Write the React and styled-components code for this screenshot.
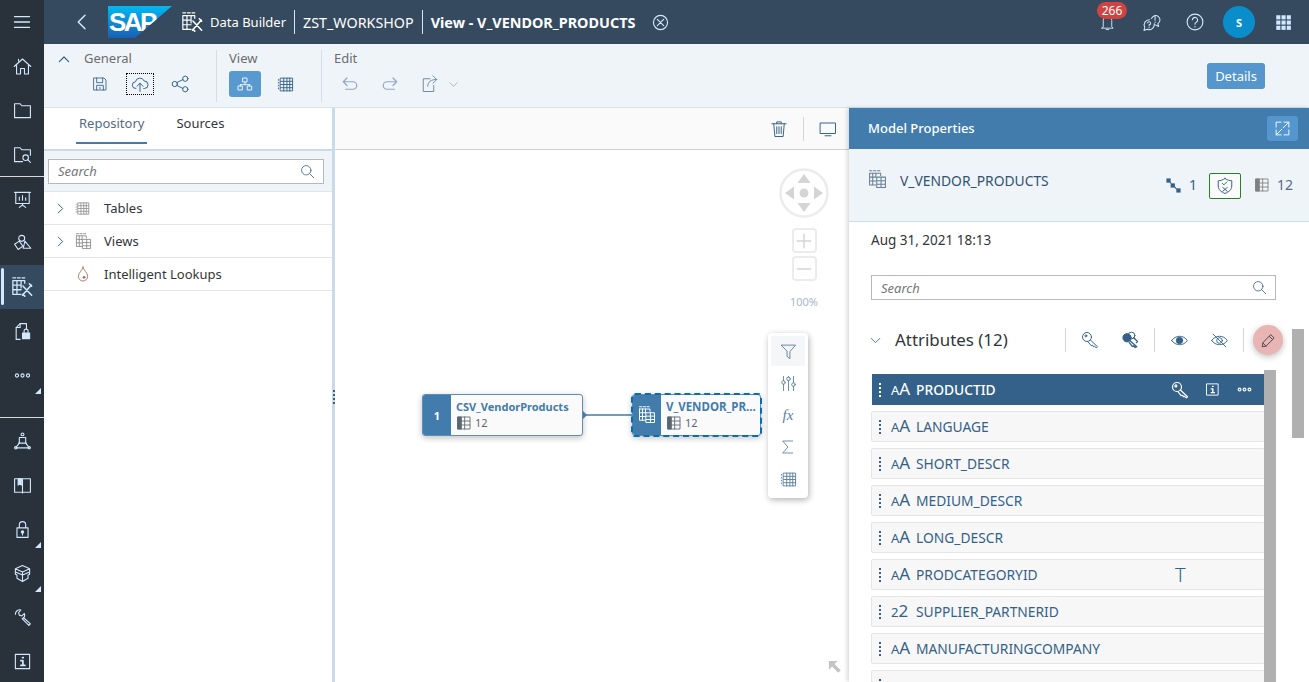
import React from 'react';
import styled, { createGlobalStyle } from 'styled-components';

const GlobalStyle = createGlobalStyle`
	html, body, #root {
		margin: 0;
		height: 100%;
		overflow: hidden;
	}
	body {
		font-family: 'Noto Sans', 'Liberation Sans', sans-serif;
		font-size: 13px;
		color: #32363a;
	}
`;

const Ico = styled.svg.attrs((p) => ({
	viewBox: '0 0 24 24',
	width: p.$s || 18,
	height: p.$s || 18,
	fill: 'none',
	stroke: 'currentColor',
	strokeLinecap: 'round',
	strokeLinejoin: 'round',
}))`
	stroke-width: ${(p) => p.$w || 1.3};
	color: ${(p) => p.$c || 'inherit'};
	flex: none;
	display: block;
	margin-right: ${(p) => p.$mr || 0}px;
	margin-left: ${(p) => p.$ml || 0}px;
`;

const P = {
	menu: <path d="M3 5.500h18M3 12h18M3 18.500h18" />,
	home: <path d="M1.500 12 12 2.500 22.500 12M4.500 10v11.500h5v-7h5v7h5V10M7 5V3" />,
	folder: <path d="M2 3.500h7l2 2.500h11v15H2z" />,
	folderSearch: (
		<>
			<path d="M12 21H2V3.500h7l2 2.500h11v7" />
			<circle cx="16" cy="16" r="3.500" />
			<path d="m18.500 18.500 3.500 3.500" />
		</>
	),
	board: <path d="M2 3h20M3.500 3v14h17V3M12 17v2M12 19l-4 3M12 19l4 3M8 13V9M12 13V7M16 13v-3" />,
	shapes: (
		<>
			<circle cx="11" cy="5.500" r="3.800" />
			<path d="m2 13 6-4 4.500 6.500-6 4zM15 9l7.500 9H13z" />
		</>
	),
	builder: (
		<>
			<path d="M2 2h3M7 2h3M12 2h3M2 5h13v3M2 5v15h9M2 10h9M2 15h9M6.500 5v15M11 5v8" />
			<path d="m13 11 9.500 10M22 10 12.500 21M20 8.500l2.500 2.500M13 20l2 2" strokeWidth="1.700" />
		</>
	),
	fileLock: (
		<>
			<path d="M9 22H4V7l5-5h8v7" />
			<path d="M4 7h5V2" />
			<rect x="12" y="14" width="9" height="7" fill="currentColor" />
			<path d="M14 14v-2.500a2.500 2.500 0 0 1 5 0V14" />
		</>
	),
	dots: (
		<>
			<circle cx="5" cy="12" r="2" />
			<circle cx="12" cy="12" r="2" />
			<circle cx="19" cy="12" r="2" />
		</>
	),
	person: (
		<>
			<circle cx="12" cy="3" r="1.800" />
			<path d="M8 7h8v7H8zM8 14l-4 5M16 14l4 5M7 14h10M3.500 20h17" />
			<circle cx="3.500" cy="20" r="1.500" />
			<circle cx="20.500" cy="20" r="1.500" />
		</>
	),
	book: (
		<>
			<path d="M2 3.500h20v17H2zM12 3.500v18" />
			<path d="M6.500 3.500h4v8l-2-1.500-2 1.500z" fill="currentColor" />
		</>
	),
	lock: (
		<>
			<path d="M5 10h14v12H5zM8 10V6a4 4 0 0 1 8 0v4" />
			<circle cx="12" cy="15" r="1.500" fill="currentColor" />
			<path d="M12 16v3" />
		</>
	),
	box: <path d="m12 2 9 4v4l-9 4-9-4V6zM3 6l9 4 9-4M3 10v3l2 1v4l7 4 7-4v-4l2-1v-3M12 14v8M12 10v4" />,
	wrench: <path d="M3 8a5.500 5.500 0 0 1 7-5.500L7 6l1 3 3 1 3.500-3a5.500 5.500 0 0 1-3 6.500L20 22l2-2-9-8" />,
	info: (
		<>
			<rect x="3" y="3" width="18" height="18" />
			<path d="M10 11h2.500v6M10 17h5M12 7h1" strokeWidth="2.200" />
		</>
	),
	back: <path d="M16 3 7 12l9 9" />,
	close: (
		<>
			<circle cx="12" cy="12" r="10" />
			<path d="m7.500 7.500 9 9M16.500 7.500l-9 9" />
		</>
	),
	bell: <path d="M6 18V9a6 6 0 0 1 12 0v9l2 2H4zM10 22h4" />,
	chat: (
		<>
			<path d="M9.500 8.500a6.500 6.500 0 0 0-6 9.500L2.500 22l4-1.500a6.500 6.500 0 0 0 9-7" />
			<path d="M12 7a5.500 5.500 0 1 1 8 6.500l1 3.500-4-2" />
			<path d="M7 12.500a2 2 0 1 1 2 2.500v1M9 18v.5M16.500 4v5M16.500 11.500v.5" />
		</>
	),
	help: (
		<>
			<circle cx="12" cy="12" r="10.500" />
			<path d="M8.500 9a3.500 3.500 0 1 1 5 3.500c-1 .6-1.500 1.200-1.500 2.500M12 18v.5" />
		</>
	),
	apps: (
		<g fill="currentColor" stroke="none">
			{[3, 10, 17].map((y) =>
				[3, 10, 17].map((x) => <rect key={x + '-' + y} x={x} y={y} width="5.500" height="5.500" />)
			)}
		</g>
	),
	up: <path d="m5 16 7-7 7 7" />,
	down: <path d="m4 8 8 8 8-8" />,
	right: <path d="m8 4 8 8-8 8" />,
	save: <path d="M3 3h15l3 3v15H3zM7 3v7h9V3M7 21v-7h10v7M12 17v2" />,
	upload: <path d="M6.500 18A4.500 4.500 0 0 1 6 9a6 6 0 0 1 11.500-1A5 5 0 0 1 18 18h-1M12 22V11M8 15l4-4 4 4" />,
	share: (
		<>
			<circle cx="19" cy="5" r="3.500" />
			<circle cx="5" cy="12" r="3.500" />
			<circle cx="19" cy="19" r="3.500" />
			<path d="m8 10 8-4M8 14l8 4" />
		</>
	),
	tree: <path d="M9 3h6v6H9zM12 9v4M5 13h14M5 13v2M19 13v2M2 15h6v6H2zM16 15h6v6h-6z" />,
	grid: (
		<path d="M5 3h17v18H5zM2 5v1M2 9v1M2 13v1M2 17v1M5 7.500h17M5 12h17M5 16.500h17M9.500 3v18M14 3v18M18 3v18" />
	),
	undo: <path d="M8 4 3 9l5 5M3 9h13a5 5 0 0 1 0 10H6" />,
	redo: <path d="m16 4 5 5-5 5M21 9H8a5 5 0 0 0 0 10h10" />,
	exportTo: <path d="M12 5H3v17h14v-8M9 15c0-6 4-9 12-9M16 1l5 5-5 5" />,
	search: (
		<>
			<circle cx="10" cy="10" r="7.500" />
			<path d="m15.500 15.500 6.500 6.500" />
		</>
	),
	table: (
		<>
			<path d="M3 3h18v18H3z" />
			<path d="M3 3h5v18H3z" fill="currentColor" />
			<path d="M13 3v18M3 9h18M3 15h18" />
		</>
	),
	views: (
		<>
			<path d="M2 1h3M7 1h3M12 1h3M2 4h14v3M2 4v15h8M2 9h8M2 14h8M6 4v15M10 4v5" />
			<path d="M11 9h11v13H11zM11 13.500h11M11 18h11M16.500 9v13" />
		</>
	),
	drop: (
		<>
			<path d="M12 1.500C11 7 5 10 5 15.500a7 7 0 0 0 14 0C19 10 13 7 12 1.500z" />
			<circle cx="13.500" cy="17" r="1.500" fill="currentColor" />
		</>
	),
	trash: (
		<>
			<path d="M2.500 5h19M9 5V2.500h6V5M5 5l1.500 17h11L19 5" />
			<path d="M9 9v9M12 9v9M15 9v9" />
		</>
	),
	monitor: <path d="M2 4h20v14H2zM8 21h8" />,
	funnel: <path d="M2 3h20l-8 9v10l-4-3v-7z" />,
	sliders: (
		<>
			<path d="M5 2v6M5 13v9M12 2v1M12 8v14M19 2v9M19 16v6" />
			<circle cx="5" cy="10.500" r="2.500" />
			<circle cx="12" cy="5.500" r="2.500" />
			<circle cx="19" cy="13.500" r="2.500" />
		</>
	),
	sigma: <path d="M19 3H4l8 9-8 9h15" />,
	key: (
		<>
			<circle cx="8" cy="8" r="6" />
			<circle cx="6.500" cy="6.500" r="1.300" />
			<path d="m12.500 12 9.500 9-1.500 1.500-2.500-2-1.500.5-1-2-2 .5-4-5" />
		</>
	),
	keys: (
		<>
			<circle cx="8" cy="9" r="5.500" fill="currentColor" />
			<circle cx="14" cy="6" r="4.500" />
			<path d="m12 13 9 8-2 1-2-2-2 .5-4-5M17 9l5 5-1.500 1.500" strokeWidth="1.800" />
		</>
	),
	eye: (
		<>
			<path d="M1 12c5-8 17-8 22 0-5 8-17 8-22 0z" />
			<circle cx="12" cy="12" r="4.500" fill="currentColor" />
		</>
	),
	eyeOff: (
		<>
			<path d="M1 12c5-8 17-8 22 0-5 8-17 8-22 0z" />
			<circle cx="12" cy="12" r="4" />
			<path d="m3 3 18 18" />
		</>
	),
	pencil: <path d="m16 3 5 5L8 21l-6 1 1-6zM13.500 5.500l5 5M3 16l5 5" />,
	expand: <path d="M10 3H3v7M14 21h7v-7M14 3h7v7M21 3l-8 8M3 14v7h7M3 21l8-8" />,
	arrowUpLeft: <path d="M3 3h14l-5 5 10 10-4 4L8 12l-5 5z" fill="currentColor" stroke="none" />,
	shield: (
		<>
			<path d="M12 2c3 2 6 3 9 3v7c0 5-4 8-9 10-5-2-9-5-9-10V5c3 0 6-1 9-3z" />
			<path d="m8.500 8.500 2 2 4-4" stroke="#2b7c2b" />
			<path d="m9 14 6 5M15 14l-6 5" />
		</>
	),
	linked: (
		<g fill="currentColor" stroke="none">
			<rect x="2" y="2" width="6" height="6" />
			<rect x="8" y="9" width="6" height="6" />
			<rect x="16" y="16" width="6" height="6" />
			<path d="M6 6h1l3 4-1 1zM12 13l1-1 4 5-1 1z" />
		</g>
	),
};

const Shell = styled.div`
	display: flex;
	height: 682px;
	overflow: hidden;
`;

const SideNav = styled.nav`
	width: 44px;
	flex: none;
	background: #29313a;
	color: #d1e8ff;
	display: flex;
	flex-direction: column;
`;

const NavItem = styled.div`
	height: 44px;
	flex: none;
	display: flex;
	align-items: center;
	justify-content: center;
	position: relative;
	background: ${(p) => (p.$active ? '#354a5f' : 'transparent')};
	&::before {
		content: '';
		display: ${(p) => (p.$active ? 'block' : 'none')};
		position: absolute;
		left: 1px;
		top: 3px;
		bottom: 4px;
		width: 3px;
		border-radius: 2px;
		background: #d1e8ff;
	}
	&::after {
		content: '';
		display: ${(p) => (p.$more ? 'block' : 'none')};
		position: absolute;
		right: 3px;
		bottom: 3px;
		border-style: solid;
		border-width: 0 0 6px 6px;
		border-color: transparent transparent #d1e8ff transparent;
	}
`;

const NavRule = styled.div`
	height: 1px;
	flex: none;
	background: #d5dadd;
	margin-top: ${(p) => p.$gap || 0}px;
	margin-bottom: ${(p) => p.$after || 0}px;
`;

const Main = styled.div`
	flex: 1;
	min-width: 0;
	display: flex;
	flex-direction: column;
`;

const ShellBar = styled.header`
	height: 44px;
	flex: none;
	background: #354a5f;
	color: #fff;
	display: flex;
	align-items: center;
	padding-left: 29px;
`;

const BackBtn = styled.div`
	color: #d1e8ff;
	width: 35px;
	flex: none;
`;

const Logo = styled.div`
	width: 64px;
	height: 32px;
	margin-right: 9px;
	flex: none;
	clip-path: polygon(0 0, 100% 0, 42% 100%, 0 100%);
	background: linear-gradient(to bottom, #00b9f2, #1a5fb4);
	color: #fff;
	font: bold 26px/33px 'Liberation Sans', sans-serif;
	letter-spacing: -2.500px;
	padding-left: 1px;
	box-sizing: border-box;
`;

const Crumb = styled.span`
	font-size: ${(p) => p.$fs || 13}px;
	font-weight: ${(p) => (p.$bold ? 700 : 400)};
	white-space: nowrap;
`;

const CrumbRule = styled.div`
	width: 1px;
	height: 24px;
	background: #d1e8ff;
	margin: 0 8px;
	flex: none;
`;

const ShellActions = styled.div`
	margin-left: auto;
	display: flex;
	align-items: center;
	color: #d1e8ff;
	padding-right: 4px;
`;

const ShellBtn = styled.div`
	width: 44px;
	height: 44px;
	display: flex;
	align-items: center;
	justify-content: center;
	position: relative;
`;

const Badge = styled.span`
	position: absolute;
	left: 12px;
	top: 2px;
	width: 30px;
	height: 17px;
	border-radius: 9px;
	background: #d04343;
	color: #fff;
	font-size: 12px;
	line-height: 17px;
	text-align: center;
`;

const Avatar = styled.div`
	width: 32px;
	height: 32px;
	border-radius: 50%;
	background: #0a8ecb;
	color: #fff;
	font-size: 11px;
	font-weight: 700;
	display: flex;
	align-items: center;
	justify-content: center;
`;

const ActionBar = styled.div`
	height: 63px;
	flex: none;
	background: #eff4f9;
	border-bottom: 1px solid #d9e1e8;
	display: flex;
	align-items: flex-start;
	color: #6a6d70;
`;

const Collapse = styled.div`
	width: 40px;
	flex: none;
	padding: 7px 0 0 12px;
	box-sizing: border-box;
	color: #346187;
`;

const Section = styled.section`
	height: 52px;
	margin-top: 6px;
	padding-right: ${(p) => p.$pr || 0}px;
	border-right: ${(p) => (p.$last ? 'none' : '1px solid #d5dde5')};
	margin-right: 12px;
	flex: none;
`;

const SectionTitle = styled.div`
	line-height: 16px;
	font-size: 13px;
	color: #6a6d70;
`;

const SectionTools = styled.div`
	display: flex;
	align-items: center;
	margin-top: 5px;
	gap: ${(p) => p.$gap || 0}px;
`;

const Tool = styled.div`
	width: ${(p) => p.$w || 32}px;
	height: 26px;
	display: flex;
	align-items: center;
	justify-content: center;
	box-sizing: border-box;
	color: ${(p) => (p.$on ? '#fff' : p.$c || '#346187')};
	background: ${(p) => (p.$on ? '#5899d0' : 'transparent')};
	border-radius: 3px;
	outline: ${(p) => (p.$focus ? '1px dotted #000' : 'none')};
	outline-offset: -3px;
	margin-left: ${(p) => p.$pull || 0}px;
`;

const DetailsBtn = styled.div`
	margin: 19px 44px 0 auto;
	width: 58px;
	height: 26px;
	background: #5496cd;
	border-radius: 3px;
	color: #fff;
	font-size: 13px;
	line-height: 26px;
	text-align: center;
	flex: none;
`;

const Workspace = styled.div`
	flex: 1;
	min-height: 0;
	display: flex;
`;

const LeftPanel = styled.aside`
	width: 288px;
	flex: none;
	background: #fff;
`;

const Tabs = styled.div`
	height: 41px;
	display: flex;
	gap: 29px;
	padding-left: 32px;
	border-bottom: 2px solid #cbdae9;
	background: #fff;
`;

const Tab = styled.div`
	height: 36px;
	box-sizing: border-box;
	line-height: 31px;
	font-size: 13px;
	color: ${(p) => (p.$on ? '#556b82' : '#32363a')};
	border-bottom: ${(p) => (p.$on ? '2px solid #427cac' : 'none')};
	padding: 0 ${(p) => (p.$on ? 3 : 0)}px;
`;

const SearchStrip = styled.div`
	height: 40px;
	background: #eff4f9;
	border-bottom: 1px solid #e5e5e5;
	display: flex;
	align-items: center;
	padding: 0 8px 0 4px;
`;

const SearchBox = styled.div`
	height: 25px;
	flex: 1;
	background: #fff;
	border: 1px solid #b8b8b8;
	box-sizing: border-box;
	display: flex;
	align-items: center;
	justify-content: space-between;
	padding: 0 8px 0 9px;
	font-style: italic;
	font-size: 13px;
	color: #74777a;
`;

const SearchGlyph = styled.span`
	color: #346187;
`;

const TreeRow = styled.div`
	height: 32px;
	border-bottom: 1px solid #e5e5e5;
	display: flex;
	align-items: center;
	padding-left: ${(p) => (p.$leaf ? 31 : 10)}px;
	font-size: 13px;
`;

const Twisty = styled.span`
	color: #346187;
	width: 21px;
	flex: none;
`;

const TreeIcon = styled.span`
	color: #8f8f8f;
	width: 29px;
	flex: none;
`;

const Splitter = styled.div`
	width: 3px;
	flex: none;
	background: #cbdae9;
	position: relative;
	&::after {
		content: '';
		position: absolute;
		left: 1px;
		top: 282px;
		height: 15px;
		width: 2px;
		background: repeating-linear-gradient(to bottom, #346187 0 2px, transparent 2px 4px);
	}
`;

const Canvas = styled.main`
	flex: 1;
	min-width: 0;
	display: flex;
	flex-direction: column;
	background: #fff;
`;

const CanvasBar = styled.div`
	height: 41px;
	flex: none;
	background: #fafafa;
	border-bottom: 1px solid #cfcfcf;
	display: flex;
	align-items: center;
	justify-content: flex-end;
	color: #346187;
	gap: 15px;
	padding-right: 12px;
`;

const BarRule = styled.div`
	width: 1px;
	height: 24px;
	background: #d5d5d5;
`;

const Diagram = styled.div`
	flex: 1;
	position: relative;
	min-height: 0;
`;

const Node = styled.div`
	position: absolute;
	left: ${(p) => p.$x}px;
	top: 244px;
	width: ${(p) => p.$w}px;
	height: 42px;
	box-sizing: border-box;
	display: flex;
	background: #fafafa;
	border: 1px solid #5b8fb8;
	border-radius: 3px;
	overflow: hidden;
	box-shadow: 0 2px 6px rgba(0, 0, 0, 0.25);
	outline: ${(p) => (p.$selected ? '2px dashed #0a6ead' : 'none')};
	outline-offset: -1px;
`;

const NodeBadge = styled.div`
	width: 28px;
	flex: none;
	background: #427cac;
	color: #fff;
	font-size: 11px;
	font-weight: 700;
	display: flex;
	align-items: center;
	justify-content: center;
`;

const NodeBody = styled.div`
	padding: 4px 0 0 5px;
	min-width: 0;
`;

const NodeName = styled.div`
	font-size: ${(p) => p.$fs || 11}px;
	font-weight: 700;
	line-height: 16px;
	color: #427cac;
	white-space: nowrap;
`;

const NodeCount = styled.div`
	display: flex;
	align-items: center;
	gap: 3px;
	font-size: 11px;
	line-height: 16px;
	color: #5c6670;
`;

const Wire = styled.div`
	position: absolute;
	left: 248px;
	top: 264px;
	width: 49px;
	height: 2px;
	background: #6e9dc4;
	&::before {
		content: '';
		position: absolute;
		left: 0;
		top: -3px;
		border-style: solid;
		border-width: 4px 0 4px 4px;
		border-color: transparent transparent transparent #427cac;
	}
`;

const NodeTools = styled.div`
	position: absolute;
	left: 433px;
	top: 183px;
	width: 40px;
	height: 165px;
	padding: 3px;
	box-sizing: border-box;
	background: #fff;
	border-radius: 4px;
	box-shadow: 1px 2px 6px rgba(0, 0, 0, 0.3);
	display: flex;
	flex-direction: column;
	gap: 2px;
`;

const NodeTool = styled.div`
	height: 30px;
	flex: none;
	display: flex;
	align-items: center;
	justify-content: center;
	background: ${(p) => (p.$on ? '#f5f6f7' : 'transparent')};
	color: #5d7f9e;
	font: italic 15px 'Liberation Serif', serif;
`;

const Navigator = styled.div`
	position: absolute;
	left: 444px;
	top: 18px;
	width: 50px;
	display: flex;
	flex-direction: column;
	align-items: center;
	color: #d5d5d5;
`;

const Ring = styled.svg.attrs({ viewBox: '0 0 50 50', width: 50, height: 50 })`
	display: block;
	margin-bottom: 10px;
`;

const ZoomBtn = styled.div`
	width: 25px;
	height: 25px;
	box-sizing: border-box;
	margin-bottom: 3px;
	border: 2px solid #ececec;
	border-radius: 4px;
	display: flex;
	align-items: center;
	justify-content: center;
`;

const ZoomLevel = styled.div`
	font-size: 11px;
	color: #a9b8c8;
	margin-top: 10px;
`;

const CornerArrow = styled.div`
	position: absolute;
	right: 7px;
	bottom: 8px;
	color: #c4c4c4;
`;

const RightPanel = styled.aside`
	width: 460px;
	flex: none;
	background: #fff;
	position: relative;
	overflow: hidden;
	box-shadow: -2px 0 4px rgba(0, 0, 0, 0.15);
`;

const PanelHead = styled.div`
	height: 41px;
	box-sizing: border-box;
	background: #427cac;
	color: #fff;
	font-size: 13px;
	font-weight: 500;
	display: flex;
	align-items: center;
	justify-content: space-between;
	padding: 0 11px 0 19px;
	line-height: 16px;
	span {
		margin-top: -2px;
	}
`;

const ExpandBtn = styled.div`
	width: 31px;
	height: 25px;
	background: #5496cd;
	border-radius: 3px;
	display: flex;
	align-items: center;
	justify-content: center;
`;

const Summary = styled.div`
	height: 73px;
	box-sizing: border-box;
	background: #eff4f9;
	border-bottom: 1px solid #c9dcee;
	display: flex;
	align-items: flex-start;
	padding: 21px 4px 0 19px;
	color: #32536f;
`;

const SummaryName = styled.div`
	margin: 1px 0 0 13px;
	font-size: 13.850px;
	line-height: 20px;
	flex: 1;
`;

const SummaryStat = styled.div`
	display: flex;
	align-items: center;
	gap: ${(p) => p.$gap || 8}px;
	margin: 6px 12px 0 0;
	font-size: 14px;
	line-height: 18px;
	color: ${(p) => p.$c || '#346187'};
`;

const ShieldBox = styled.div`
	width: 32px;
	height: 26px;
	box-sizing: border-box;
	border: 1px solid #2b7c2b;
	border-radius: 2px;
	background: #fafafa;
	color: #346187;
	margin: 3px 13px 0 0;
	display: flex;
	align-items: center;
	justify-content: center;
`;

const Stamp = styled.div`
	padding: 9px 0 0 22px;
	height: 35px;
	line-height: 18px;
	font-size: 13.500px;
`;

const PanelSearch = styled(SearchBox)`
	width: 405px;
	flex: none;
	height: 25px;
	margin: 9px 0 0 22px;
`;

const AttrHead = styled.div`
	height: 30px;
	margin: 25px 0 19px;
	padding-left: 20px;
	display: flex;
	align-items: center;
	color: #346187;
`;

const AttrTitle = styled.h3`
	margin: -2px 0 0 13px;
	width: 166px;
	flex: none;
	font-size: 16.900px;
	font-weight: 400;
	color: #32363a;
	white-space: nowrap;
`;

const AttrTool = styled.div`
	width: 40px;
	display: flex;
	justify-content: center;
	flex: none;
`;

const AttrRule = styled.div`
	width: 1px;
	height: 24px;
	margin: 0 4px;
	background: #d5d5d5;
	flex: none;
`;

const EditFab = styled.div`
	width: 30px;
	height: 30px;
	margin-left: 5px;
	border-radius: 50%;
	background: #e8b4b4;
	box-shadow: 0 2px 6px rgba(0, 0, 0, 0.25);
	color: #32363a;
	display: flex;
	align-items: center;
	justify-content: center;
	flex: none;
`;

const AttrList = styled.div`
	display: flex;
	flex-direction: column;
	gap: 6px;
	margin-left: 22px;
	width: 394px;
`;

const AttrRow = styled.div`
	height: 31px;
	box-sizing: border-box;
	flex: none;
	display: flex;
	align-items: center;
	position: relative;
	margin: 0 ${(p) => (p.$on ? 1 : 0)}px;
	background: ${(p) => (p.$on ? '#34618a' : '#f7f7f7')};
	border: 1px solid ${(p) => (p.$on ? '#34618a' : '#e5e5e5')};
	border-radius: ${(p) => (p.$on ? 0 : 2)}px;
	color: ${(p) => (p.$on ? '#fff' : '#346187')};
	padding-left: ${(p) => (p.$on ? 6 : 7)}px;
	font-size: 13.800px;
`;

const Grip = styled.span`
	width: 2px;
	height: 14px;
	flex: none;
	background: repeating-linear-gradient(to bottom, currentColor 0 2px, transparent 2px 4px);
	margin-right: 10px;
`;

const KindMark = styled.span`
	width: 25px;
	flex: none;
	font-size: 17px;
	line-height: 16px;
	small {
		font-size: 13px;
	}
`;

const AttrName = styled.span`
	font-weight: ${(p) => (p.$on ? 500 : 400)};
	white-space: nowrap;
`;

const RowTools = styled.div`
	margin-left: auto;
	display: flex;
	align-items: center;
	gap: 16px;
	padding-right: 10px;
`;

const CursorMark = styled.span`
	position: absolute;
	left: 303px;
	font: 300 20px/20px 'Noto Sans', sans-serif;
	color: #346187;
`;

const ScrollThumb = styled.div`
	position: absolute;
	left: ${(p) => p.$x}px;
	top: ${(p) => p.$y}px;
	width: ${(p) => p.$w}px;
	height: ${(p) => p.$h}px;
	background: #b0b0b0;
`;

const navTop = [{ p: P.home }, { p: P.folder }, { p: P.folderSearch }];
const navMid = [
	{ p: P.board },
	{ p: P.shapes },
	{ p: P.builder, active: true, s: 22 },
	{ p: P.fileLock },
	{ p: P.dots, more: true },
];
const navBottom = [
	{ p: P.person },
	{ p: P.book },
	{ p: P.lock, more: true },
	{ p: P.box, more: true },
	{ p: P.wrench },
	{ p: P.info },
];

const attributes = [
	{ name: 'PRODUCTID', on: true },
	{ name: 'LANGUAGE' },
	{ name: 'SHORT_DESCR' },
	{ name: 'MEDIUM_DESCR' },
	{ name: 'LONG_DESCR' },
	{ name: 'PRODCATEGORYID', cursor: true },
	{ name: 'SUPPLIER_PARTNERID', numeric: true },
	{ name: 'MANUFACTURINGCOMPANY' },
	{ name: '' },
];

const renderNav = (list) =>
	list.map((n, i) => (
		<NavItem key={i} $active={n.active} $more={n.more}>
			<Ico $s={n.s || 19} $w={1.4}>{n.p}</Ico>
		</NavItem>
	));

const kindMark = (a) => {
	if (!a.name) return null;
	return a.numeric ? <><small>2</small>2</> : <><small>A</small>A</>;
};

export default function App() {
	return (
		<>
			<GlobalStyle />
			<Shell>
				<SideNav>
					<NavItem>
						<Ico $s={20} $w={1.6}>{P.menu}</Ico>
					</NavItem>
					{renderNav(navTop)}
					<NavRule />
					{renderNav(navMid)}
					<NavRule $gap={20} $after={1} />
					{renderNav(navBottom)}
				</SideNav>

				<Main>
					<ShellBar>
						<BackBtn>
							<Ico $s={18} $w={2}>{P.back}</Ico>
						</BackBtn>
						<Logo>SAP</Logo>
						<Ico $s={22} $mr={7}>{P.builder}</Ico>
						<Crumb>Data Builder</Crumb>
						<CrumbRule />
						<Crumb $fs={14.3}>ZST_WORKSHOP</Crumb>
						<CrumbRule />
						<Crumb $fs={14.4} $bold>View - V_VENDOR_PRODUCTS</Crumb>
						<Ico $s={17} $w={1.6} $c="#d1e8ff" $ml={17}>{P.close}</Ico>
						<ShellActions>
							<ShellBtn>
								<Ico $s={17}>{P.bell}</Ico>
								<Badge>266</Badge>
							</ShellBtn>
							<ShellBtn>
								<Ico $s={19}>{P.chat}</Ico>
							</ShellBtn>
							<ShellBtn>
								<Ico $s={18} $w={1.5}>{P.help}</Ico>
							</ShellBtn>
							<ShellBtn>
								<Avatar>S</Avatar>
							</ShellBtn>
							<ShellBtn>
								<Ico $s={18}>{P.apps}</Ico>
							</ShellBtn>
						</ShellActions>
					</ShellBar>

					<ActionBar>
						<Collapse>
							<Ico $s={16} $w={1.8}>{P.up}</Ico>
						</Collapse>
						<Section $pr={20}>
							<SectionTitle>General</SectionTitle>
							<SectionTools $gap={8}>
								<Tool><Ico $s={16}>{P.save}</Ico></Tool>
								<Tool $focus><Ico $s={18}>{P.upload}</Ico></Tool>
								<Tool><Ico $s={18}>{P.share}</Ico></Tool>
							</SectionTools>
						</Section>
						<Section $pr={20}>
							<SectionTitle>View</SectionTitle>
							<SectionTools $gap={8}>
								<Tool $on><Ico $s={16}>{P.tree}</Ico></Tool>
								<Tool><Ico $s={17}>{P.grid}</Ico></Tool>
							</SectionTools>
						</Section>
						<Section $last>
							<SectionTitle>Edit</SectionTitle>
							<SectionTools $gap={8}>
								<Tool $c="#8fa8bf"><Ico $s={18} $w={1.6}>{P.undo}</Ico></Tool>
								<Tool $c="#8fa8bf"><Ico $s={18} $w={1.6}>{P.redo}</Ico></Tool>
								<Tool $c="#6c8aa6"><Ico $s={18}>{P.exportTo}</Ico></Tool>
								<Tool $w={12} $pull={-7} $c="#6c8aa6"><Ico $s={11}>{P.down}</Ico></Tool>
							</SectionTools>
						</Section>
						<DetailsBtn>Details</DetailsBtn>
					</ActionBar>

					<Workspace>
						<LeftPanel>
							<Tabs>
								<Tab $on>Repository</Tab>
								<Tab>Sources</Tab>
							</Tabs>
							<SearchStrip>
								<SearchBox>
									Search
									<SearchGlyph><Ico $s={15}>{P.search}</Ico></SearchGlyph>
								</SearchBox>
							</SearchStrip>
							<TreeRow>
								<Twisty><Ico $s={13} $w={1.8}>{P.right}</Ico></Twisty>
								<TreeIcon><Ico $s={15}>{P.grid}</Ico></TreeIcon>
								Tables
							</TreeRow>
							<TreeRow>
								<Twisty><Ico $s={13} $w={1.8}>{P.right}</Ico></Twisty>
								<TreeIcon><Ico $s={17}>{P.views}</Ico></TreeIcon>
								Views
							</TreeRow>
							<TreeRow $leaf>
								<TreeIcon><Ico $s={16} $c="#a0715a">{P.drop}</Ico></TreeIcon>
								Intelligent Lookups
							</TreeRow>
						</LeftPanel>
						<Splitter />
						<Canvas>
							<CanvasBar>
								<Ico $s={18}>{P.trash}</Ico>
								<BarRule />
								<Ico $s={18}>{P.monitor}</Ico>
							</CanvasBar>
							<Diagram>
								<Navigator>
									<Ring>
										<circle cx="25" cy="25" r="23.500" fill="none" stroke="#ececec" strokeWidth="2.500" />
										<circle cx="25" cy="25" r="4.500" fill="#d5d5d5" />
										<path d="M25 6l6.500 9h-13zM25 44l6.500-9h-13zM6 25l9-6.500v13zM44 25l-9-6.500v13z" fill="#d5d5d5" />
									</Ring>
									<ZoomBtn><Ico $s={18} $w={2}><path d="M12 3v18M3 12h18" /></Ico></ZoomBtn>
									<ZoomBtn><Ico $s={18} $w={2}><path d="M3 12h18" /></Ico></ZoomBtn>
									<ZoomLevel>100%</ZoomLevel>
								</Navigator>

								<Node $x={87} $w={161}>
									<NodeBadge>1</NodeBadge>
									<NodeBody>
										<NodeName>CSV_VendorProducts</NodeName>
										<NodeCount>
											<Ico $s={16} $c="#5c6670">{P.table}</Ico>
											12
										</NodeCount>
									</NodeBody>
								</Node>
								<Wire />
								<Node $x={297} $w={129} $selected>
									<NodeBadge><Ico $s={18}>{P.views}</Ico></NodeBadge>
									<NodeBody>
										<NodeName $fs={11.5}>V_VENDOR_PR...</NodeName>
										<NodeCount>
											<Ico $s={16} $c="#5c6670">{P.table}</Ico>
											12
										</NodeCount>
									</NodeBody>
								</Node>

								<NodeTools>
									<NodeTool $on><Ico $s={17}>{P.funnel}</Ico></NodeTool>
									<NodeTool><Ico $s={17}>{P.sliders}</Ico></NodeTool>
									<NodeTool>fx</NodeTool>
									<NodeTool><Ico $s={16}>{P.sigma}</Ico></NodeTool>
									<NodeTool><Ico $s={17}>{P.grid}</Ico></NodeTool>
								</NodeTools>

								<CornerArrow><Ico $s={15}>{P.arrowUpLeft}</Ico></CornerArrow>
							</Diagram>
						</Canvas>

						<RightPanel>
							<PanelHead>
								<span>Model Properties</span>
								<ExpandBtn><Ico $s={17}>{P.expand}</Ico></ExpandBtn>
							</PanelHead>
							<Summary>
								<Ico $s={19} $c="#6a7e92">{P.views}</Ico>
								<SummaryName>V_VENDOR_PRODUCTS</SummaryName>
								<SummaryStat $gap={7}>
									<Ico $s={17}>{P.linked}</Ico>
									1
								</SummaryStat>
								<ShieldBox><Ico $s={18}>{P.shield}</Ico></ShieldBox>
								<SummaryStat $c="#556b82" $gap={7}>
									<Ico $s={16} $c="#808080">{P.table}</Ico>
									12
								</SummaryStat>
							</Summary>
							<Stamp>Aug 31, 2021 18:13</Stamp>
							<PanelSearch>
								Search
								<SearchGlyph><Ico $s={15}>{P.search}</Ico></SearchGlyph>
							</PanelSearch>
							<AttrHead>
								<Ico $s={13} $w={1.5}>{P.down}</Ico>
								<AttrTitle>Attributes (12)</AttrTitle>
								<AttrRule />
								<AttrTool><Ico $s={18}>{P.key}</Ico></AttrTool>
								<AttrTool><Ico $s={18}>{P.keys}</Ico></AttrTool>
								<AttrRule />
								<AttrTool><Ico $s={17}>{P.eye}</Ico></AttrTool>
								<AttrTool><Ico $s={17}>{P.eyeOff}</Ico></AttrTool>
								<AttrRule />
								<EditFab><Ico $s={15}>{P.pencil}</Ico></EditFab>
							</AttrHead>
							<AttrList>
								{attributes.map((a, i) => (
									<AttrRow key={i} $on={a.on}>
										<Grip />
										<KindMark>{kindMark(a)}</KindMark>
										<AttrName $on={a.on}>{a.name}</AttrName>
										{a.on && (
											<RowTools>
												<Ico $s={18} $w={1.6}>{P.key}</Ico>
												<Ico $s={15} $w={1.5}>{P.info}</Ico>
												<Ico $s={17} $w={1.6}>{P.dots}</Ico>
											</RowTools>
										)}
										{a.cursor && <CursorMark>T</CursorMark>}
									</AttrRow>
								))}
							</AttrList>
							<ScrollThumb $x={415} $y={262} $w={12} $h={320} />
							<ScrollThumb $x={443} $y={221} $w={12} $h={109} />
						</RightPanel>
					</Workspace>
				</Main>
			</Shell>
		</>
	);
}
